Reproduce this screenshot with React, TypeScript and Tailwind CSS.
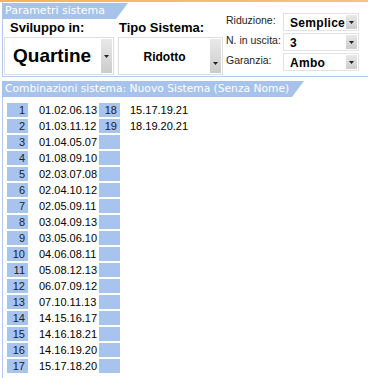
const col1 = [
  "01.02.06.13", "01.03.11.12", "01.04.05.07", "01.08.09.10", "02.03.07.08",
  "02.04.10.12", "02.05.09.11", "03.04.09.13", "03.05.06.10", "04.06.08.11",
  "05.08.12.13", "06.07.09.12", "07.10.11.13", "14.15.16.17", "14.16.18.21",
  "14.16.19.20", "15.17.18.20",
];
const col2 = ["15.17.19.21", "18.19.20.21"];

function Arrow() {
  return (
    <svg width="5" height="3" viewBox="0 0 5 3" className="block">
      <path d="M0 0h5L2.5 3z" fill="#222" />
    </svg>
  );
}

function DropButton({ tall }: { tall?: boolean }) {
  return (
    <div
      className={
        "w-[11px] self-stretch flex justify-center bg-gradient-to-b from-[#e9e9e9] to-[#cbcbcb] " +
        (tall ? "items-end pb-[8px]" : "items-center")
      }
    >
      <Arrow />
    </div>
  );
}

function Tab({ label, width, size }: { label: string; width: string; size: string }) {
  return (
    <div className="flex h-[16px]">
      <div className={"bg-[#a7c3ec] text-white leading-[16px] pl-[3px] whitespace-nowrap font-['DejaVu_Sans',sans-serif] " + width + " " + size}>
        {label}
      </div>
      <svg width="12" height="16" viewBox="0 0 12 16" className="block">
        <path d="M0 0h12L0 16z" fill="#a7c3ec" />
      </svg>
    </div>
  );
}

function SmallSelect({ label, value }: { label: string; value: string }) {
  return (
    <div className="flex items-center h-[18px]">
      <div className="w-[57px] text-[10.5px] text-[#222] leading-none pb-[3px]">{label}</div>
      <div className="w-[76px] h-full flex border border-[#e2e2e2] pr-px py-px">
        <div className="flex-1 pl-[6px] text-[12px] font-bold leading-[16px] tracking-[0.3px]">{value}</div>
        <DropButton />
      </div>
    </div>
  );
}

export default function App() {
  return (
    <div className="w-[368px] h-[378px] bg-white overflow-hidden font-['Liberation_Sans',Arial,sans-serif] text-black">
      <div className="h-[2px] bg-gradient-to-r from-[#f3b35c] to-[#f6c27e]" />
      <div className="ml-[2px] flex border-l border-b border-[#b3cbef] h-[75px]">
        <div className="flex flex-col -ml-px">
          <div className="pt-px">
            <Tab label="Parametri sistema" width="w-[114px]" size="text-[11px]" />
          </div>
          <div className="flex gap-[4px] pl-[2px]">
            <div className="flex flex-col">
              <div className="h-[18px] pl-[6px] text-[13px] font-bold leading-[18px]">Sviluppo in:</div>
              <div className="w-[110px] h-[38px] flex border border-[#dedede] pr-px py-px">
                <div className="flex-1 flex items-center pl-[8px] text-[19px] font-bold">Quartine</div>
                <DropButton />
              </div>
            </div>
            <div className="flex flex-col">
              <div className="h-[18px] pl-[1px] text-[13px] font-bold leading-[18px]">Tipo Sistema:</div>
              <div className="w-[105px] h-[38px] flex border border-[#dedede] pr-px py-px">
                <div className="flex-1 flex items-center justify-center pt-[2px] text-[12px] font-bold">Ridotto</div>
                <DropButton tall />
              </div>
            </div>
          </div>
        </div>
        <div className="flex flex-col gap-[2px] pt-[11px] pl-[3px]">
          <SmallSelect label="Riduzione:" value="Semplice" />
          <SmallSelect label="N. in uscita:" value="3" />
          <SmallSelect label="Garanzia:" value="Ambo" />
        </div>
      </div>
      <div className="mt-[4px] ml-[2px]">
        <Tab label="Combinazioni sistema: Nuovo Sistema (Senza Nome)" width="w-[290px]" size="text-[10.7px]" />
      </div>
      <div className="ml-[2px] border-l border-[#b3cbef] h-[281px] pt-[6px] pl-[4px] flex flex-col gap-[2px]">
        {col1.map((c, i) => (
          <div key={i} className="flex h-[14px] text-[11px] leading-[14px]">
            <div className="w-[21px] bg-[#a7c4ee] text-right pr-[3px] text-[#222]">{i + 1}</div>
            <div className="w-[71px] pl-[11px]">{c}</div>
            <div className="w-[21px] bg-[#a7c4ee] text-right pr-[3px] text-[#222]">{i < col2.length ? i + 18 : ""}</div>
            <div className="pl-[10px]">{col2[i] ?? ""}</div>
          </div>
        ))}
      </div>
    </div>
  );
}
